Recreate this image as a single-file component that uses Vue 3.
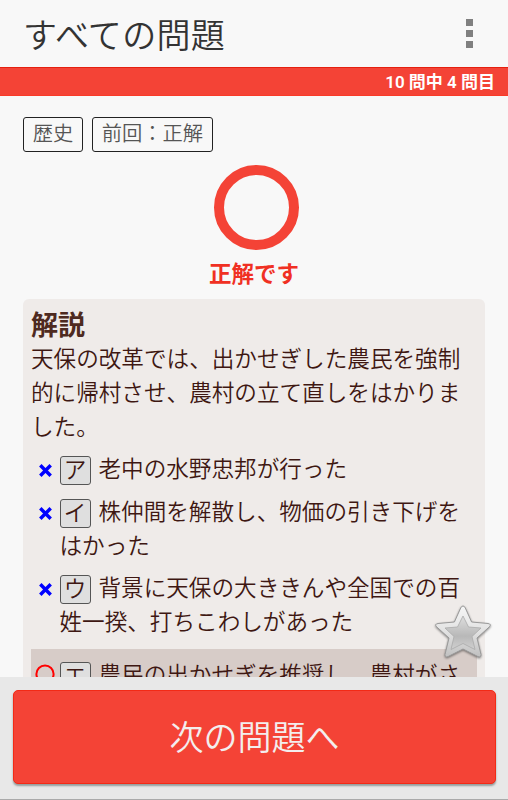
<template>
  <div class="screen">
    <header class="app-header">
      <h1 class="app-title">すべての問題</h1>
      <button class="menu-button" aria-label="メニュー">
        <span v-for="n in 3" :key="n" class="menu-dot"></span>
      </button>
    </header>

    <div class="progress-bar"><span class="progress-text">10 問中 4 問目</span></div>

    <main class="content">
      <div class="tags">
        <span v-for="tag in tags" :key="tag" class="tag"><span class="tag-text">{{ tag }}</span></span>
      </div>

      <div class="result">
        <div class="result-ring"></div>
        <p class="result-text">正解です</p>
      </div>

      <section class="panel">
        <h2 class="panel-title">解説</h2>
        <p class="panel-text">{{ explanation }}</p>
        <ul class="choices">
          <li v-for="choice in choices" :key="choice.label" class="choice" :class="{ correct: choice.correct }">
            <svg v-if="choice.correct" class="mark-circle" viewBox="0 0 20 20">
              <circle cx="10" cy="10" r="8.6" fill="none" stroke="#f00" stroke-width="2" />
            </svg>
            <svg v-else class="mark-cross" viewBox="0 0 12 12">
              <path d="M1.2 1.2L10.8 10.8M10.8 1.2L1.2 10.8" stroke="#00f" stroke-width="3.2" />
            </svg>
            <p class="choice-text"><span class="choice-label"><span>{{ choice.label }}</span></span>{{ choice.text }}</p>
          </li>
        </ul>
      </section>
    </main>

    <svg class="star" viewBox="0 0 60 60">
      <defs>
        <linearGradient id="starOuter" x1="0" y1="0" x2="0" y2="1">
          <stop offset="0" stop-color="#f6f6f6" />
          <stop offset="0.5" stop-color="#e2e2e2" />
          <stop offset="1" stop-color="#c0c0c0" />
        </linearGradient>
        <linearGradient id="starInner" x1="0" y1="0" x2="0" y2="1">
          <stop offset="0" stop-color="#dedede" />
          <stop offset="0.6" stop-color="#b8b8b8" />
          <stop offset="1" stop-color="#d0d0d0" />
        </linearGradient>
      </defs>
      <path
        class="star-outer"
        d="M30 4Q31.5 4 32.3 6L38.6 20L55 21.500Q59 22.300 56.300 24.900L44 36L48 52.500Q48 56 44.800 54.500L30 47L15.200 54.500Q12 56 12 52.500L16 36L3.700 24.900Q1 22.300 5 21.500L21.400 20L27.700 6Q28.500 4 30 4Z"
      />
      <path
        class="star-inner"
        d="M30 14L35.500 25L48 26L39 34.500L42 47.500L30 41.500L18 47.500L21 34.500L12 26L24.500 25Z"
      />
    </svg>

    <footer class="footer">
      <button class="next-button"><span class="next-text">次の問題へ</span></button>
    </footer>
  </div>
</template>

<script setup>
const tags = ['歴史', '前回：正解'];

const explanation = '天保の改革では、出かせぎした農民を強制\n的に帰村させ、農村の立て直しをはかりま\nした。';

const choices = [
  { label: 'ア', text: '老中の水野忠邦が行った', correct: false },
  { label: 'イ', text: '株仲間を解散し、物価の引き下げを\nはかった', correct: false },
  { label: 'ウ', text: '背景に天保の大ききんや全国での百\n姓一揆、打ちこわしがあった', correct: false },
  { label: 'エ', text: '農民の出かせぎを推奨し、農村がさ', correct: true }
];
</script>

<style>
body {
  margin: 0;
  overflow: hidden;
}
</style>

<style scoped>
.screen {
  position: relative;
  box-sizing: border-box;
  width: 508px;
  height: 800px;
  overflow: hidden;
  display: flex;
  flex-direction: column;
  background: #f8f8f8;
  font-family: Roboto, 'Noto Sans CJK JP', sans-serif;
}

h1, h2, p, ul {
  margin: 0;
  padding: 0;
}

button {
  border: none;
  padding: 0;
  background: none;
  font-family: inherit;
}

.app-header {
  flex: none;
  display: flex;
  align-items: center;
  justify-content: space-between;
  height: 67px;
  padding: 0 35px 0 23px;
}

.app-title {
  padding-top: 4px;
  font-size: 34px;
  font-weight: 350;
  line-height: 50px;
  letter-spacing: 0.3px;
  color: #333;
}

.menu-button {
  display: flex;
  flex-direction: column;
  gap: 4px;
}

.menu-dot {
  width: 7px;
  height: 7px;
  background: #808080;
}

.progress-bar {
  flex: none;
  box-sizing: border-box;
  height: 29px;
  padding-right: 13px;
  border-top: 1px solid #e5200f;
  border-bottom: 1px solid #fa3a28;
  background: #f44336;
  text-align: right;
}

.progress-text {
  font-size: 17px;
  font-weight: 600;
  line-height: 28px;
  color: #fff;
}

.content {
  flex: 1;
  min-height: 0;
  overflow: hidden;
  padding: 21px 23px 0;
}

.tags {
  display: flex;
  gap: 9px;
}

.tag {
  box-sizing: border-box;
  height: 35px;
  padding: 0 8.7px;
  border: 1px solid #222;
  border-radius: 3px;
}

.tag-text {
  font-size: 20.3px;
  font-weight: 350;
  line-height: 33px;
  color: #555;
}

.result {
  display: flex;
  flex-direction: column;
  align-items: center;
  margin-top: 13px;
}

.result-ring {
  box-sizing: border-box;
  width: 85px;
  height: 85px;
  margin-left: 4px;
  border: 10px solid #f44336;
  border-radius: 50%;
}

.result-text {
  height: 49px;
  font-size: 22.5px;
  font-weight: 700;
  line-height: 49px;
  color: #f03023;
}

.panel {
  box-sizing: border-box;
  height: 460px;
  padding: 10px 8px 0;
  border-radius: 6px;
  background: #efebe9;
  color: #3e1712;
}

.panel-title {
  font-size: 27px;
  font-weight: 700;
  line-height: 34px;
  color: #4e2a20;
}

.panel-text,
.choice-text {
  font-size: 22.6px;
  font-weight: 350;
  line-height: 34px;
  white-space: pre;
}

.choices {
  display: flex;
  flex-direction: column;
  gap: 8.5px;
  margin-top: 8px;
  list-style: none;
}

.choice {
  display: grid;
  grid-template-columns: 28.5px 1fr;
}

.choice.correct {
  padding: 10px 0;
  background: #d7ccc8;
}

.mark-cross {
  width: 13px;
  height: 13px;
  margin: 11px 0 0 7.5px;
}

.mark-circle {
  width: 20px;
  height: 20px;
  margin: 5px 0 0 4px;
}

.choice-label {
  display: inline-flex;
  align-items: center;
  justify-content: center;
  box-sizing: border-box;
  width: 31px;
  height: 29px;
  margin: 3px 8px 0 0;
  border: 1px solid #555;
  border-radius: 3px;
  background: #dfdfdf;
  line-height: 27px;
  vertical-align: top;
}

.star {
  position: absolute;
  left: 433px;
  top: 602px;
  width: 60px;
  height: 60px;
  filter: drop-shadow(0 1px 1px rgba(0, 0, 0, 0.45));
}

.star-outer {
  fill: url(#starOuter);
  stroke: #999;
  stroke-width: 1;
}

.star-inner {
  fill: url(#starInner);
  stroke: #aaa;
  stroke-width: 0.8;
}

.footer {
  position: relative;
  flex: none;
  box-sizing: border-box;
  height: 123px;
  padding: 13px 13px 0;
  border-bottom: 1px solid #aaa;
  background: #e8e8e8;
}

.next-button {
  box-sizing: border-box;
  width: 483px;
  height: 94px;
  padding-top: 2px;
  border: 1px solid #f32a16;
  border-radius: 5px;
  background: #f44336;
  box-shadow: 0 2px 2px rgba(80, 95, 95, 0.55);
}

.next-text {
  font-size: 34px;
  font-weight: 350;
  line-height: 50px;
  color: #f3eeee;
}
</style>
